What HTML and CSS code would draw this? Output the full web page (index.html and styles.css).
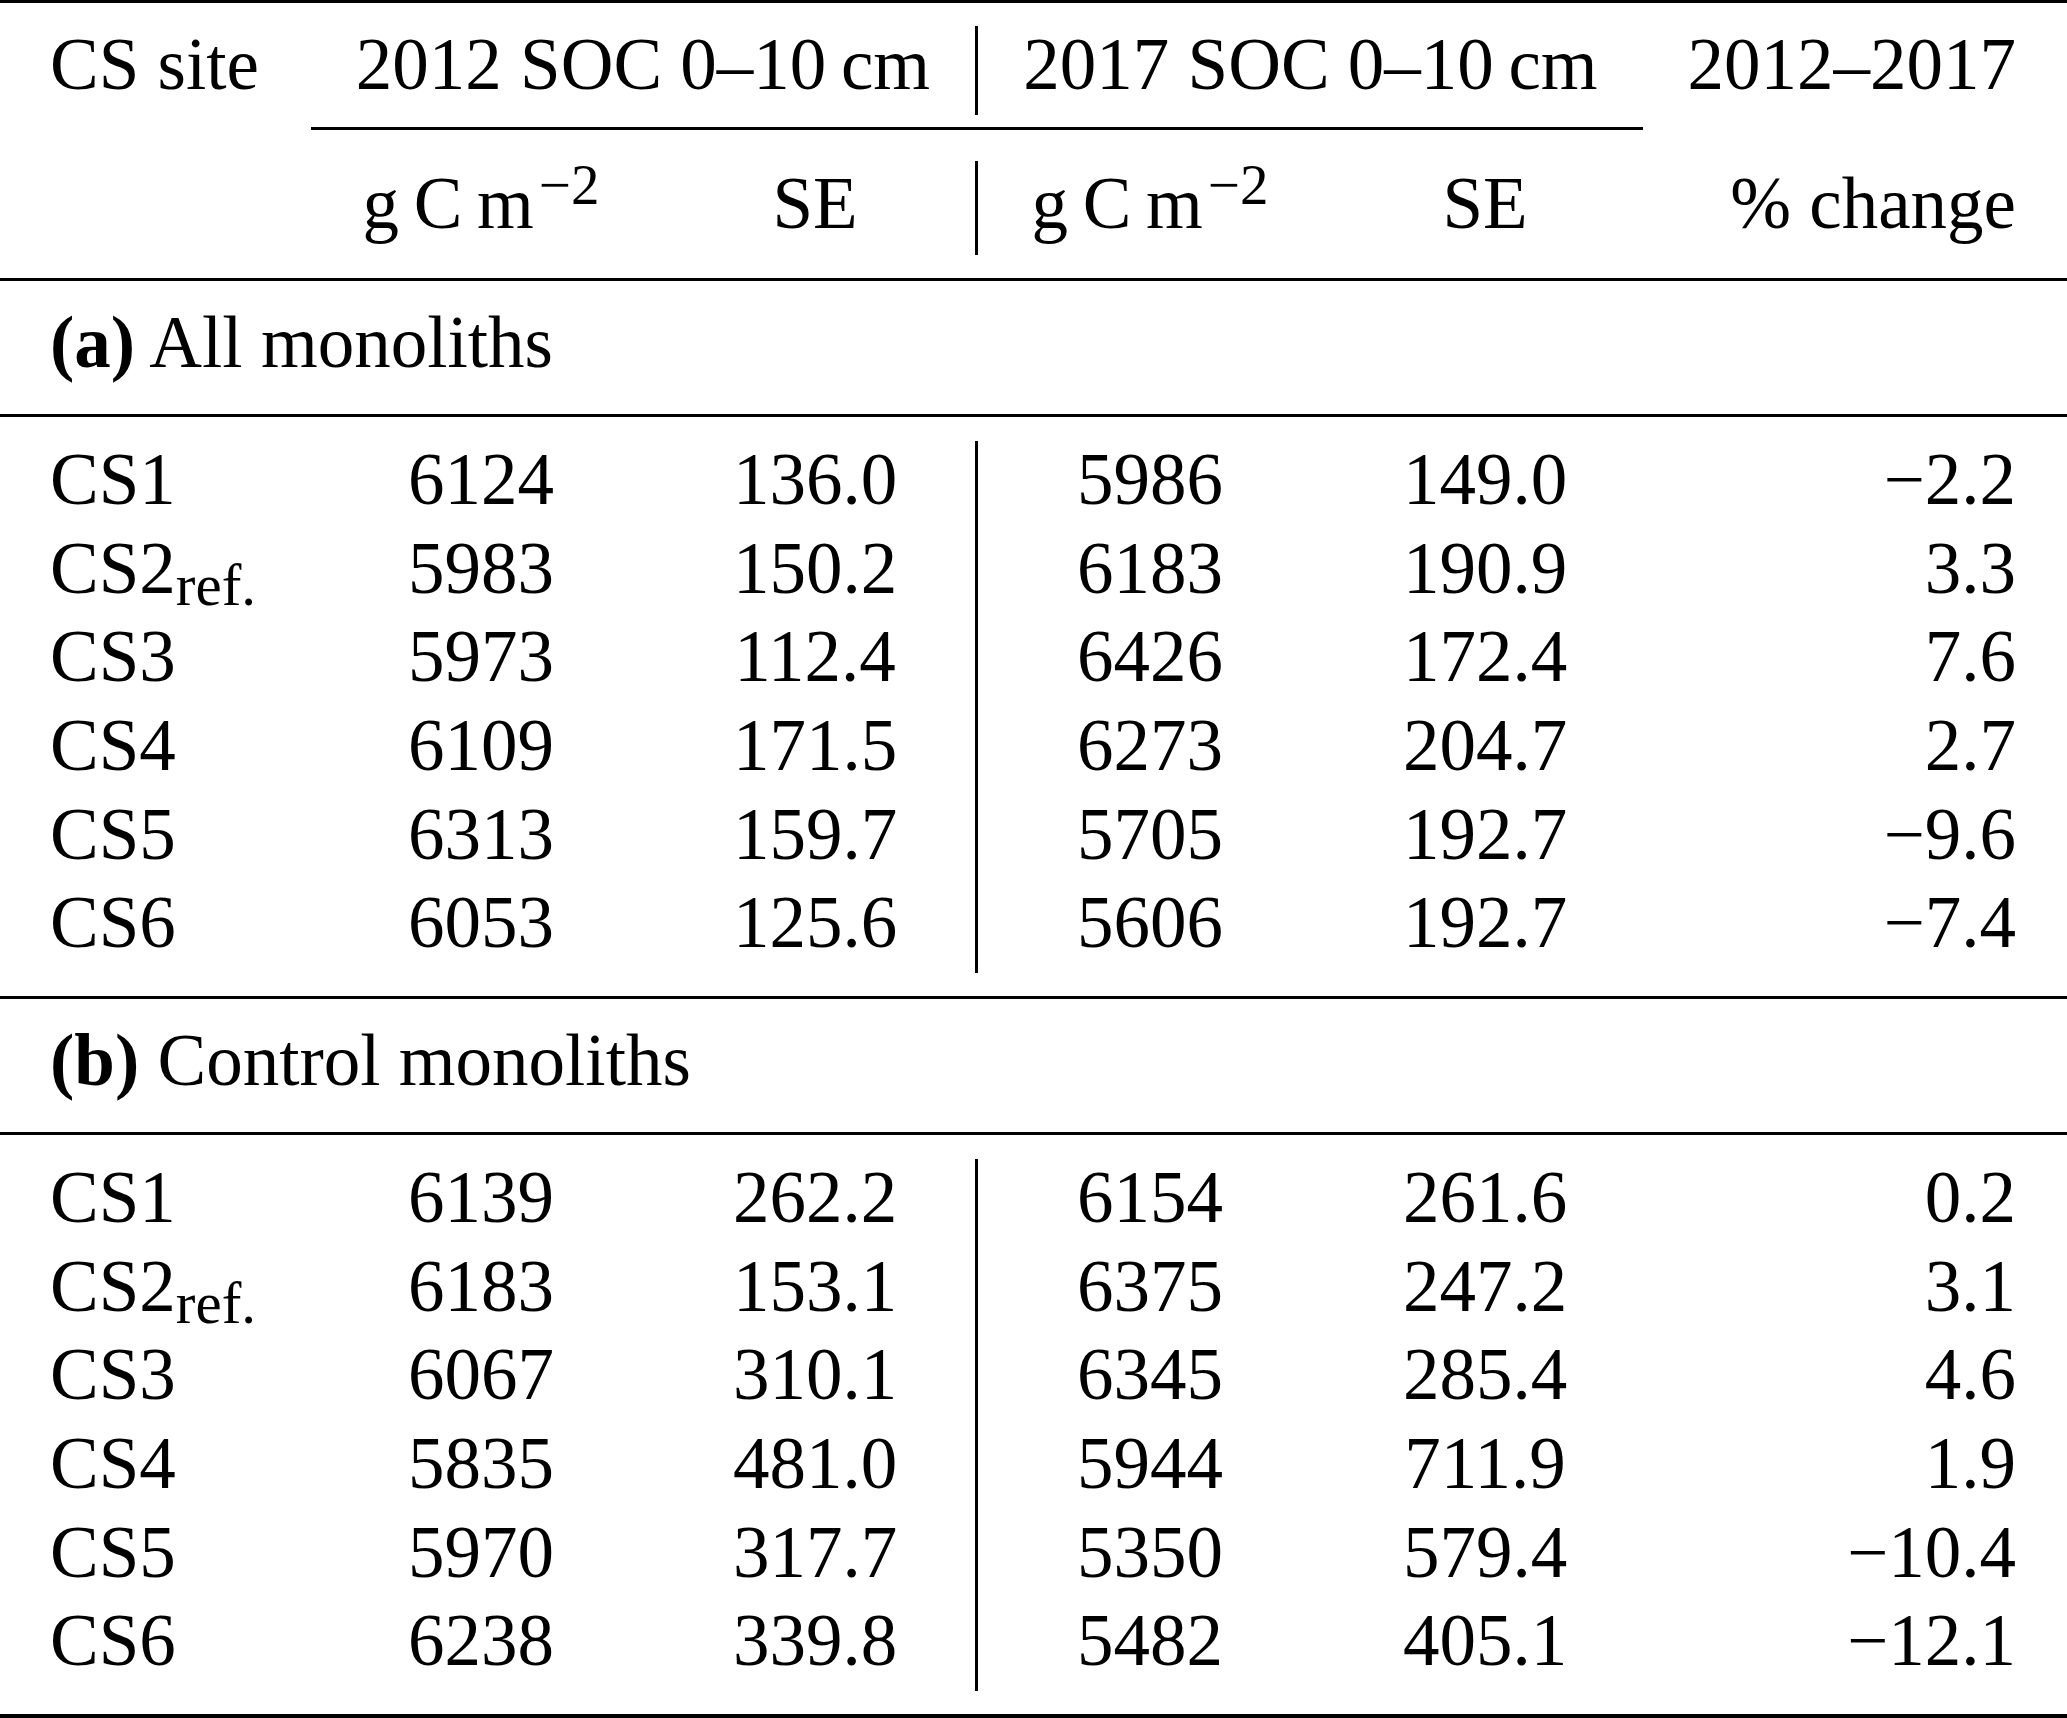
FILE: index.html
```html
<!DOCTYPE html>
<html lang="en">
<head>
<meta charset="utf-8">
<title>SOC table</title>
<link rel="stylesheet" href="styles.css">
</head>
<body>
<div class="tbl">
  <div class="rule heavy"></div>
  <div class="head">
    <div class="row r1">
      <div class="c c1">CS site</div>
      <div class="c span-a">2012 SOC 0–10&thinsp;cm</div>
      <div class="c span-b vl">2017 SOC 0–10&thinsp;cm</div>
      <div class="c c6">2012–2017</div>
    </div>
    <div class="cmid"></div>
    <div class="row r2">
      <div class="c c1"></div>
      <div class="c c2">g&thinsp;C&thinsp;m<sup>−2</sup></div>
      <div class="c c3">SE</div>
      <div class="c c4 vl">g&thinsp;C&thinsp;m<sup>−2</sup></div>
      <div class="c c5">SE</div>
      <div class="c c6">% change</div>
    </div>
  </div>
  <div class="rule"></div>
  <div class="title"><div class="row"><div class="c full"><b>(a)</b> All monoliths</div></div></div>
  <div class="rule"></div>
  <div class="body">
    <div class="row"><div class="c c1">CS1</div><div class="c c2">6124</div><div class="c c3">136.0</div><div class="c c4 vl">5986</div><div class="c c5">149.0</div><div class="c c6">−2.2</div></div>
    <div class="row"><div class="c c1">CS2<sub>ref.</sub></div><div class="c c2">5983</div><div class="c c3">150.2</div><div class="c c4 vl">6183</div><div class="c c5">190.9</div><div class="c c6">3.3</div></div>
    <div class="row"><div class="c c1">CS3</div><div class="c c2">5973</div><div class="c c3">112.4</div><div class="c c4 vl">6426</div><div class="c c5">172.4</div><div class="c c6">7.6</div></div>
    <div class="row"><div class="c c1">CS4</div><div class="c c2">6109</div><div class="c c3">171.5</div><div class="c c4 vl">6273</div><div class="c c5">204.7</div><div class="c c6">2.7</div></div>
    <div class="row"><div class="c c1">CS5</div><div class="c c2">6313</div><div class="c c3">159.7</div><div class="c c4 vl">5705</div><div class="c c5">192.7</div><div class="c c6">−9.6</div></div>
    <div class="row"><div class="c c1">CS6</div><div class="c c2">6053</div><div class="c c3">125.6</div><div class="c c4 vl">5606</div><div class="c c5">192.7</div><div class="c c6">−7.4</div></div>
  </div>
  <div class="rule"></div>
  <div class="title"><div class="row"><div class="c full"><b>(b)</b> Control monoliths</div></div></div>
  <div class="rule"></div>
  <div class="body">
    <div class="row"><div class="c c1">CS1</div><div class="c c2">6139</div><div class="c c3">262.2</div><div class="c c4 vl">6154</div><div class="c c5">261.6</div><div class="c c6">0.2</div></div>
    <div class="row"><div class="c c1">CS2<sub>ref.</sub></div><div class="c c2">6183</div><div class="c c3">153.1</div><div class="c c4 vl">6375</div><div class="c c5">247.2</div><div class="c c6">3.1</div></div>
    <div class="row"><div class="c c1">CS3</div><div class="c c2">6067</div><div class="c c3">310.1</div><div class="c c4 vl">6345</div><div class="c c5">285.4</div><div class="c c6">4.6</div></div>
    <div class="row"><div class="c c1">CS4</div><div class="c c2">5835</div><div class="c c3">481.0</div><div class="c c4 vl">5944</div><div class="c c5">711.9</div><div class="c c6">1.9</div></div>
    <div class="row"><div class="c c1">CS5</div><div class="c c2">5970</div><div class="c c3">317.7</div><div class="c c4 vl">5350</div><div class="c c5">579.4</div><div class="c c6">−10.4</div></div>
    <div class="row"><div class="c c1">CS6</div><div class="c c2">6238</div><div class="c c3">339.8</div><div class="c c4 vl">5482</div><div class="c c5">405.1</div><div class="c c6">−12.1</div></div>
  </div>
  <div class="rule heavy bottom"></div>
</div>
</body>
</html>
```

FILE: styles.css
```css
html, body {
  margin: 0;
  padding: 0;
  background: #ffffff;
}

body {
  width: 2067px;
  height: 1718px;
  overflow: hidden;
  font-family: "Liberation Serif", "Times New Roman", serif;
  font-size: 73px;
  color: #000000;
}

.tbl {
  display: flex;
  flex-direction: column;
  width: 2067px;
}

.rule {
  height: 3px;
  background: #000000;
}

.rule.bottom {
  height: 4px;
}

.head {
  padding: 23px 0 23px 0;
}

.cmid {
  height: 3px;
  margin: 12px 0 31px 311px;
  width: 1332px;
  background: #000000;
}

.title {
  padding: 23px 0 21.33px 0;
}

.body {
  padding: 24px 0 23px 0;
}

.row {
  display: grid;
  grid-template-columns: 311px 340px 324px 344px 324px 1fr;
  height: 88.67px;
  line-height: 77.67px;
  white-space: nowrap;
}

.row.r1 {
  height: 89px;
}

.row.r2 {
  height: 94px;
}

.r2 .c {
  padding-top: 4px;
}

.c {
  text-align: center;
}

.c1 {
  text-align: left;
  padding-left: 50px;
}

.c3 {
  padding-left: 4px;
}

.c4 {
  padding-left: 3px;
}

.c5 {
  padding-left: 8px;
}

.c6 {
  text-align: right;
  padding-right: 51px;
}

.vl {
  border-left: 3px solid #000000;
}

.span-a {
  grid-column: 2 / span 2;
}

.span-b {
  grid-column: 4 / span 2;
  padding-left: 0;
}

.full {
  grid-column: 1 / -1;
  text-align: left;
  padding-left: 50px;
}

sup {
  font-size: 57px;
  line-height: 0;
  vertical-align: 24px;
  padding-left: 5px;
}

sub {
  font-size: 59px;
  line-height: 0;
  vertical-align: -12px;
}

b {
  font-weight: bold;
}
```
